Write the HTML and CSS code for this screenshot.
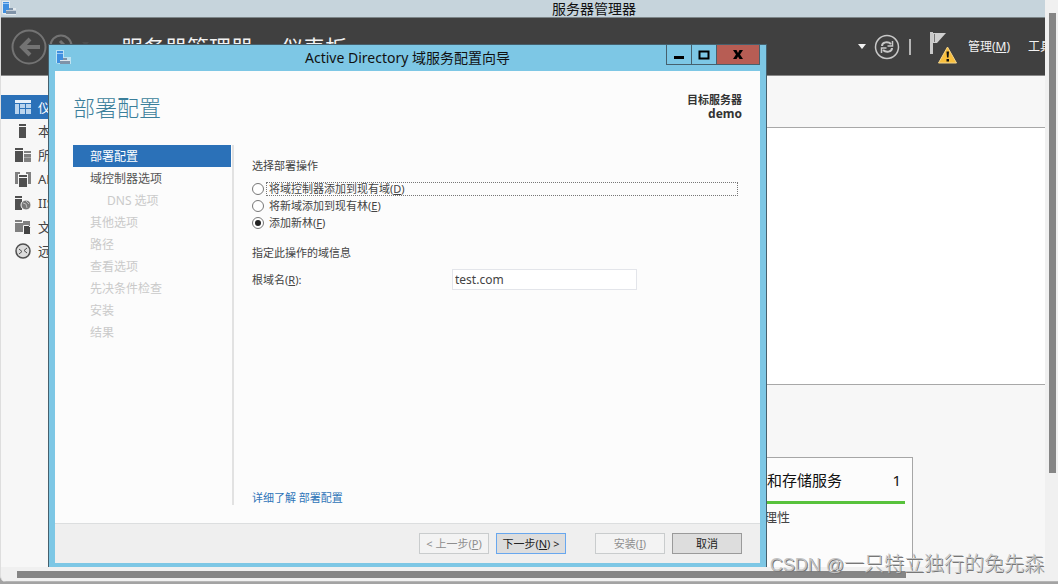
FILE: index.html
```html
<!DOCTYPE html>
<html lang="zh-CN">
<head>
<meta charset="utf-8">
<title>服务器管理器</title>
<link rel="stylesheet" href="styles.css">
</head>
<body>
<div class="viewer">
  <div class="app">
    <header class="app-title">
      <svg class="server-icon" width="16" height="16" viewBox="0 0 16 16"><path fill="#fff" opacity=".5" d="M1 0h8v7h6v7H5l-4-1z"/><path fill="#3f8fe0" d="M2 1h6v11H2z"/><path fill="#9cc8f5" d="M2 2h6v1H2z"/><path fill="#7f93a8" d="M5 9h10v4H5z"/><path fill="#c3cdd8" d="M5 9h10v1H5z"/><path fill="#7f93a8" d="M8 7h4v2H8z"/></svg>
      <span class="app-title-text">服务器管理器</span>
    </header>
    <div class="toolbar">
      <svg class="nav-arrows" width="84" height="36" viewBox="0 0 84 36" fill="none" stroke="#737373"><circle cx="18" cy="18" r="16.500" stroke-width="2"/><path d="M29 18H12M19 10l-8 8 8 8" stroke-width="4"/><circle cx="50" cy="17" r="10.500" stroke-width="2"/><path d="M44 17h10M49 12l5 5-5 5" stroke-width="3"/><path d="M71 13h7l-3.500 4z" fill="#4b4b4b" stroke="none"/></svg>
      <h1 class="breadcrumb">服务器管理器<span class="crumb-dot">·</span>仪表板</h1>
      <div class="tools">
        <svg width="8" height="5" viewBox="0 0 8 5"><path d="M0 0h8L4 5z" fill="#f2f2f2"/></svg>
        <svg width="26" height="26" viewBox="0 0 26 26" fill="none" stroke="#c8c8c8"><circle cx="13" cy="13" r="11.500" stroke-width="1.500"/><path d="M8 12c0-4 6-5 9-2M18 14c0 4-6 5-9 2" stroke-width="2"/><path d="M18.500 7v5h-5M7.500 19v-5h5" stroke-width="1.500"/></svg>
        <span class="bar"></span>
        <svg width="29" height="34" viewBox="0 0 29 34"><path d="M1 2h3v22H1z" fill="#c9c9c9"/><path d="M4 3h13L8 13H4z" fill="#cfcfcf"/><path d="M5.500 4v8" stroke="#777"/><path d="M18.500 17l9 16h-18z" fill="#f8bf3d" stroke="#f5d58a" stroke-linejoin="round"/><path d="M17.500 21.500h2.500l-.5 6h-1.500zM17.500 29h2.500v2.500h-2.500z" fill="#111"/></svg>
        <button class="menu" type="button">管理(<u>M</u>)</button>
        <button class="menu menu-cut" type="button">工具</button>
      </div>
    </div>
    <div class="workspace">
      <nav class="sidebar">
        <a class="side on" href="#"><svg width="16" height="16" viewBox="0 0 16 16"><path fill="#e6f0fa" d="M0 1h16v3H0z"/><path fill="#b9d4ee" d="M0 5h4v10H0zM5 5h5v4H5zM11 5h5v4h-5zM5 10h5v5H5zM11 10h5v5h-5z"/></svg>仪表板</a>
        <a class="side" href="#"><svg width="16" height="16" viewBox="0 0 16 16" fill="#505050"><path d="M4 1h7v2H4zM4 4h7v11H4z"/></svg>本地服务器</a>
        <a class="side" href="#"><svg width="16" height="16" viewBox="0 0 16 16" fill="#505050"><path d="M0 1h8v2H0zM0 4h8v11H0z"/><path fill="#808080" d="M9 4h7v2H9zM9 7h7v8H9z"/><path fill="#a8a8a8" d="M9 10h7v1H9z"/></svg>所有服务器</a>
        <a class="side" href="#"><svg width="16" height="16" viewBox="0 0 16 16" fill="#505050"><path fill="#808080" d="M0 1h5v2H3v10H0zM16 1h-5v2h2v10h3z"/><path d="M4 4h8v2H4zM4 7h8v9H4z"/></svg>AD DS</a>
        <a class="side" href="#"><svg width="16" height="16" viewBox="0 0 16 16" fill="#505050"><path d="M0 1h7v2H0zM0 4h7v11H0z"/><circle cx="11" cy="10" r="5" fill="#777" stroke="#f7f7f7"/><path d="M8 8l3 1 1 4M11 6l3 3" stroke="#bbb" fill="none"/></svg>IIS</a>
        <a class="side" href="#"><svg width="16" height="16" viewBox="0 0 16 16" fill="#808080"><path d="M0 1h7v2H0zM0 4h15v9H0zM8 2h7v2H8z"/><path fill="#444" stroke="#f7f7f7" d="M8.500 6.500h5l2 2v7h-7z"/></svg>文件和存储服务</a>
        <a class="side" href="#"><svg width="16" height="16" viewBox="0 0 16 16" fill="none" stroke="#505050"><circle cx="8" cy="8" r="7" stroke-width="1.500" fill="#dcdcdc"/><path d="M4 6l3 2.500L4 11M12 5L9 7.500l3 2.500"/></svg>远程桌面服务</a>
      </nav>
      <main class="dashboard">
        <section class="welcome"></section>
        <section class="tile">
          <h2 class="tile-head"><span>文件和存储服务</span><span>1</span></h2>
          <p class="tile-row">可管理性</p>
        </section>
      </main>
    </div>

    <form class="dialog">
      <header class="dialog-title">
        <svg class="server-icon" width="16" height="16" viewBox="0 0 16 16"><path fill="#fff" opacity=".5" d="M0 0h8v7h7v7H4l-4-1z"/><path fill="#3f8fe0" d="M1 1h6v12H1z"/><path fill="#9cc8f5" d="M1 3h6v1H1z"/><path fill="#7f93a8" d="M4 10h10v4H4z"/><path fill="#dfe6ec" d="M4 10h10v1H4z"/><path fill="#7f93a8" d="M7 8h4v2H7z"/></svg>
        <span class="dialog-name">Active Directory 域服务配置向导</span>
        <div class="win-buttons">
          <button type="button" class="win" aria-label="最小化"><svg width="12" height="10" viewBox="0 0 12 10"><path d="M1 6h10v3H1z"/></svg></button>
          <button type="button" class="win" aria-label="最大化"><svg width="12" height="10" viewBox="0 0 12 10"><path d="M1.500 1.500h9v7h-9z" fill="none" stroke="#000" stroke-width="2"/></svg></button>
          <button type="button" class="win close" aria-label="关闭"><svg width="12" height="10" viewBox="0 0 12 10"><path d="M1 0h3.500L6 3l1.500-3H11L8 4.500 11 9H7.500L6 6.500 4.500 9H1l3-4.500z"/></svg></button>
        </div>
      </header>
      <div class="dialog-body">
        <div class="page-head">
          <h2 class="page-title">部署配置</h2>
          <p class="target">目标服务器<br><span class="target-name">demo</span></p>
        </div>
        <div class="columns">
          <ol class="steps">
            <li class="step current">部署配置</li>
            <li class="step ready">域控制器选项</li>
            <li class="step sub">DNS 选项</li>
            <li class="step">其他选项</li>
            <li class="step">路径</li>
            <li class="step">查看选项</li>
            <li class="step">先决条件检查</li>
            <li class="step">安装</li>
            <li class="step">结果</li>
          </ol>
          <div class="fields">
            <fieldset class="choices">
              <legend class="caption">选择部署操作</legend>
              <label class="choice"><input type="radio" name="op"><span class="choice-text focused">将域控制器添加到现有域(<u>D</u>)</span></label>
              <label class="choice"><input type="radio" name="op"><span class="choice-text">将新域添加到现有林(<u>E</u>)</span></label>
              <label class="choice"><input type="radio" name="op" checked><span class="choice-text">添加新林(<u>F</u>)</span></label>
            </fieldset>
            <p class="caption">指定此操作的域信息</p>
            <div class="domain">
              <label for="root">根域名(<u>R</u>):</label>
              <input id="root" class="textbox" type="text" value="test.com">
            </div>
            <a class="more" href="#">详细了解 部署配置</a>
          </div>
        </div>
      </div>
      <footer class="actions">
        <button class="btn" type="button" disabled>&lt; 上一步(<u>P</u>)</button>
        <button class="btn primary" type="button">下一步(<u>N</u>) &gt;</button>
        <button class="btn install" type="button" disabled>安装(<u>I</u>)</button>
        <button class="btn" type="button">取消</button>
      </footer>
    </form>
  </div>
  <div class="scroll-y"><div class="thumb-y"></div></div>
  <div class="scroll-x"><div class="thumb-x"></div></div>
  <div class="watermark"><span class="watermark-site">CSDN @</span>一只特立独行的兔先森</div>
</div>
</body>
</html>
```

FILE: styles.css
```css
* { box-sizing: border-box; }
body {
  margin: 0;
  background: #a3a3a3;
  color: #444;
  font: 11px/16px "Noto Sans", "Noto Sans CJK SC", sans-serif;
}
h1, h2, p, ol, fieldset { margin: 0; padding: 0; border: 0; font-weight: 400; }
button, input { font: inherit; color: inherit; }
a { text-decoration: none; color: inherit; }
svg { display: block; flex: none; }

.viewer {
  position: relative;
  display: grid;
  grid-template-columns: minmax(0, 1fr) 13px;
  grid-template-rows: minmax(0, 1fr) 15px;
  height: calc(100vh - 2px);
  background: #f0f0f0;
  border-left: 1px solid #dedede;
  border-radius: 0 0 0 6px;
  overflow: hidden;
}
.app {
  position: relative;
  display: flex;
  flex-direction: column;
  overflow: hidden;
  background: #f7f7f7;
}
.app-title {
  display: flex;
  align-items: center;
  height: 18px;
  background: #c6d4dc;
  border-bottom: 1px solid #7c8588;
  color: #111;
  font-size: 14px;
}
.app-title-text { flex: 1; padding-left: 126px; text-align: center; }

.toolbar {
  display: flex;
  align-items: center;
  height: 58px;
  flex: none;
  padding-left: 10px;
  background: #404040;
  border-bottom: 1px solid #8a8a8a;
  color: #f2f2f2;
}
.breadcrumb { padding-left: 26px; font-size: 22px; line-height: 26px; white-space: nowrap; }
.crumb-dot { display: inline-block; width: 28px; text-align: center; }
.tools { display: flex; align-items: center; margin-left: auto; }
.tools svg + svg { margin-left: 8px; }
.bar { width: 2px; height: 16px; margin: 0 18px 0 9px; background: #b5b5b5; }
.menu {
  padding: 0;
  margin-left: 10px;
  border: 0;
  background: none;
  font-size: 12px;
  white-space: nowrap;
}
.menu-cut { width: 17px; margin-left: 18px; overflow: hidden; text-align: left; }

.workspace { display: flex; flex: 1; min-height: 0; }
.sidebar { width: 150px; flex: none; padding-top: 19px; }
.side {
  display: flex;
  align-items: center;
  gap: 7px;
  height: 24px;
  padding-left: 14px;
  font-size: 13px;
  white-space: nowrap;
}
.side.on { background: #2b71b8; color: #fff; }
.dashboard { flex: 1; min-width: 0; display: flex; flex-direction: column; padding-top: 51px; }
.welcome {
  height: 258px;
  flex: none;
  background: #fff;
  border: solid #a8a8a8;
  border-width: 1px 0;
}
.tile {
  flex: 1;
  margin: 72px 132px 0 540px;
  padding: 7px;
  border: 1px solid #a6a6a6;
  border-bottom: 0;
  background: #fcfcfc;
}
.tile-head {
  display: flex;
  justify-content: space-between;
  padding: 4px 4px 10px 38px;
  border-bottom: 3px solid #58c23c;
  color: #111;
  font-size: 15px;
  line-height: 22px;
  white-space: nowrap;
}
.tile-row { padding: 5px 0 0 39px; font-size: 13px; }

.dialog {
  position: absolute;
  inset: 44px 278px 0 47px;
  display: flex;
  flex-direction: column;
  padding: 0 6px 4px;
  background: #7dc7e5;
  border: solid #46606d;
  border-width: 1px 1px 0;
}
.dialog-title {
  display: grid;
  grid-template-columns: 94px 1fr 94px;
  height: 26px;
  flex: none;
}
.dialog-title .server-icon { margin: 5px 0 0 1px; }
.dialog-name { color: #111; font-size: 14px; line-height: 26px; text-align: center; white-space: nowrap; }
.win-buttons { display: flex; height: 20px; }
.win {
  display: grid;
  place-items: center;
  width: 25px;
  padding: 0;
  border: solid #46606d;
  border-width: 0 0 1px 1px;
  background: none;
}
.win.close { flex: 1; background: #b75d54; border-right-width: 1px; }

.dialog-body {
  flex: 1;
  min-height: 0;
  display: flex;
  flex-direction: column;
  padding: 21px 18px 18px;
  background: #fcfcfc;
}
.page-head { display: flex; justify-content: space-between; height: 53px; flex: none; }
.page-title { color: #3b7f9b; font-size: 22px; line-height: 30px; font-weight: 300; }
.target { padding-top: 1px; color: #333; font-weight: 700; line-height: 14px; text-align: right; }
.target-name { font-size: 12px; }
.columns { display: flex; flex: 1; min-height: 0; }
.steps {
  width: 161px;
  flex: none;
  padding-right: 1px;
  border-right: 2px solid #e2e2e2;
  list-style: none;
  color: #cacaca;
  font-size: 12px;
}
.step { height: 22px; padding-left: 17px; line-height: 24px; }
.step.current { background: #2b71b8; color: #fff; }
.step.ready { color: #555; }
.step.sub { padding-left: 34px; }
.fields { flex: 1; display: flex; flex-direction: column; padding: 13px 4px 0 18px; }
.caption { padding: 0; }
.choices { padding-bottom: 14px; }
.choice { display: flex; align-items: center; gap: 2px; height: 17px; }
.choices legend { margin-bottom: 6px; }
.choice input {
  appearance: none;
  display: grid;
  place-items: center;
  width: 12px;
  height: 12px;
  margin: 0;
  border: 1px solid #777;
  border-radius: 50%;
  background: #fff;
}
.choice input:checked::before { content: ""; width: 6px; height: 6px; border-radius: 50%; background: #222; }
.choice-text { flex: 1; height: 14px; padding-left: 2px; border: 1px solid transparent; line-height: 12px; }
.choice-text.focused { border: 1px dotted #777; }
.domain { display: grid; grid-template-columns: 200px 185px; align-items: center; margin-top: 8px; }
.textbox { height: 21px; padding: 0 2px; border: 1px solid #e3e5ea; background: #fff; font-size: 12px; }
.more { margin-top: auto; line-height: 14px; color: #2e74b8; }

.actions {
  display: flex;
  justify-content: flex-end;
  align-items: center;
  gap: 7px;
  height: 40px;
  flex: none;
  padding-right: 18px;
  background: #efefef;
  border-top: 1px solid #dcdedf;
}
.btn { width: 70px; height: 21px; padding: 0; border: 1px solid #9a9a9a; background: #dddddd; color: #222; line-height: 17px; white-space: nowrap; }
.btn:disabled { border-color: #c9cccd; background: #f3f3f3; color: #8e8e8e; }
.btn.primary { border-color: #68a7ee; }
.btn.install { margin-left: 22px; }

.scroll-y { padding: 13px 2px 0 4px; }
.thumb-y { height: 83%; background: #858585; }
.scroll-x { grid-column: 1 / -1; padding: 4px 152px 0 16px; border-bottom: 1px solid #b5b5b5; }
.thumb-x { height: 7px; background: #858585; }
.watermark {
  position: absolute;
  right: 14px;
  bottom: 4px;
  color: #c4c4c4;
  font: 300 20px/26px "Liberation Sans", "Noto Sans CJK SC", sans-serif;
  text-shadow: 1px 1px 0 #777;
}
.watermark-site { font-size: 18px; }
```
